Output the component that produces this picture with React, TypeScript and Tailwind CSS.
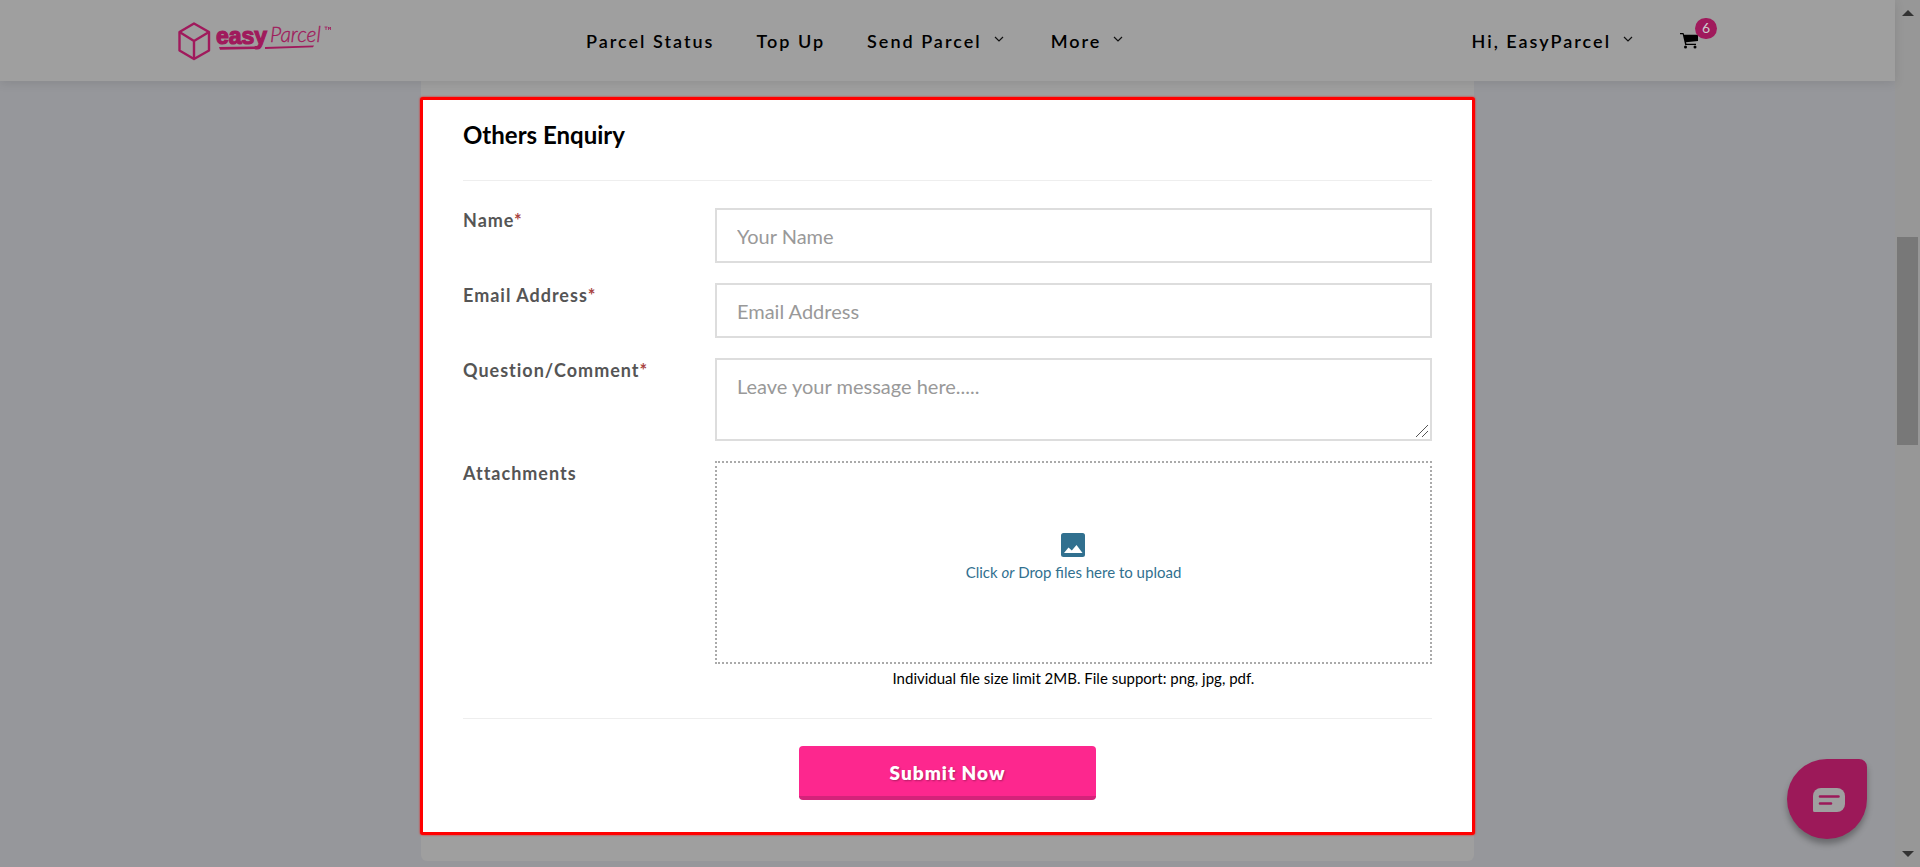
import type { ReactNode } from "react";

function Logo() {
  return (
    <svg width="154" height="40" viewBox="0 0 154 40" role="img" aria-label="easyParcel">
      <g fill="none" stroke="#a01a5c" strokeWidth="2.4" strokeLinejoin="round">
        <path d="M17 2.500 32 11v18.500L17 38 2.500 29.500V11Z" />
        <path d="M2.500 11 17 20l15-9M17 20v18" />
      </g>
      <text x="39" y="23" fontFamily="Liberation Sans" fontWeight="700" fontSize="23" fill="#a01a5c" stroke="#a01a5c" strokeWidth="1.2">
        easy
      </text>
      <text x="93" y="21" fontFamily="Lato" fontStyle="italic" fontWeight="300" fontSize="21" fill="#a01a5c" stroke="#a01a5c" strokeWidth="0.3">
        Parcel
      </text>
      <path d="M42 26 78 25.500v2.500l-35 .8ZM88 26 137 24.500l-1 1.700-48 1.800Z" fill="#a01a5c" />
      <path d="M147.500 6h3M149 6v3M151.500 9V6l1 1.500 1-1.500v3" fill="none" stroke="#a01a5c" strokeWidth="0.8" />
    </svg>
  );
}

function Chevron() {
  return (
    <svg width="10" height="6" viewBox="0 0 10 6" className="mr-[5px] mb-1 ml-3" aria-hidden="true">
      <path d="m1 1 4 4 4-4" fill="none" stroke="#111" strokeWidth="1.2" />
    </svg>
  );
}

function NavLink({ children, menu = false }: { children: ReactNode; menu?: boolean }) {
  return (
    <a href="#" className="flex items-center whitespace-nowrap text-lg font-semibold tracking-[2px] text-black">
      {children}
      {menu && <Chevron />}
    </a>
  );
}

function Row({ label, id, required = false, children }: { label: string; id: string; required?: boolean; children: ReactNode }) {
  return (
    <div className="grid grid-cols-[26fr_74fr]">
      <label htmlFor={id} className="text-lg leading-6 font-bold tracking-[1px] text-[#555]">
        {label}
        {required && <span className="text-[#a94442]">*</span>}
      </label>
      <div>{children}</div>
    </div>
  );
}

const field =
  "block w-full border-2 border-[#ddd] bg-white px-5 text-xl text-[#555] placeholder:text-[#999] focus:outline-none";

export default function App() {
  return (
    <div className="flex min-h-screen bg-[#96979b] font-['Lato',sans-serif] text-black">
      <div className="flex min-w-0 flex-1 flex-col">
        <header className="z-10 flex h-[81px] items-center bg-[#9f9f9f] px-[177px] shadow-[0_2px_10px_rgba(0,0,0,0.1)]">
          <a href="#" className="w-[409px]">
            <Logo />
          </a>
          <nav className="flex items-center gap-[42px]">
            <NavLink>Parcel Status</NavLink>
            <NavLink>Top Up</NavLink>
            <NavLink menu>Send Parcel</NavLink>
            <NavLink menu>More</NavLink>
          </nav>
          <div className="ml-auto flex items-center pr-5">
            <NavLink menu>Hi, EasyParcel</NavLink>
            <a href="#" aria-label="Cart" className="relative ml-[42px]">
              <svg width="18" height="16" viewBox="0 0 18 16" aria-hidden="true">
                <path d="M0 0h3.500l.6 1.700H18V8L6 9.300l.4 1.500H16V12H5.200L2.700 1.300H0Z" />
                <circle cx="5.500" cy="14" r="1.500" />
                <circle cx="15" cy="14" r="1.500" />
              </svg>
              <span className="absolute -top-[15px] left-[15px] flex h-[21px] w-[22px] items-center justify-center rounded-full bg-[#a01a5c] text-sm text-[#ccc]">
                6
              </span>
            </a>
          </div>
        </header>

        <main className="mx-auto w-full max-w-[1053px] rounded-b-md bg-[#9f9f9f] pt-4 pb-[26px]">
          <section className="-mx-px rounded-[3px] border-3 border-[#f00] bg-white px-10 pb-8 shadow-[0_0_2px_#f00]">
            <h1 className="border-b border-[#eee] pt-5 pb-[30px] text-2xl leading-[30px] font-bold">Others Enquiry</h1>
            <form className="pt-[27px]" onSubmit={(e) => e.preventDefault()}>
              <div className="flex flex-col gap-5">
                <Row label="Name" id="name" required>
                  <input id="name" type="text" placeholder="Your Name" className={`${field} h-[55px]`} />
                </Row>
                <Row label="Email Address" id="email" required>
                  <input id="email" type="email" placeholder="Email Address" className={`${field} h-[55px]`} />
                </Row>
                <Row label="Question/Comment" id="message" required>
                  <div className="relative">
                    <textarea id="message" placeholder="Leave your message here....." className={`${field} h-[83px] resize-none py-3`} />
                    <svg width="12" height="12" viewBox="0 0 12 12" className="pointer-events-none absolute right-1 bottom-1" aria-hidden="true">
                      <path d="M0 12 12 0M6 12l6-6" stroke="#555" strokeWidth="1" />
                    </svg>
                  </div>
                </Row>
                <Row label="Attachments" id="files">
                  <label className="flex h-[203px] cursor-pointer flex-col items-center justify-center border-2 border-dotted border-[#aaa] pb-[10px] text-[15px] leading-6 text-[#31708f]">
                    <input id="files" type="file" multiple className="sr-only" />
                    <svg width="26" height="26" viewBox="0 0 26 26" className="mb-0.5" aria-hidden="true">
                      <rect x="1" y="1" width="24" height="24" rx="2.500" fill="#31708f" />
                      <path d="m4 21 4.500-5.500 3.300 3L16.500 13 22.500 21Z" fill="#fff" />
                    </svg>
                    <span>
                      Click <em>or</em> Drop files here to upload
                    </span>
                  </label>
                  <p className="pt-0.5 text-center text-[15px] leading-6">Individual file size limit 2MB. File support: png, jpg, pdf.</p>
                </Row>
              </div>
              <div className="mt-7 flex justify-center border-t border-[#eee] pt-[27px]">
                <button
                  type="submit"
                  className="h-[54px] w-[297px] rounded border-b-4 border-[#d4237a] bg-[#fd278e] pt-1 text-[19px] font-extrabold tracking-[1px] text-white [text-shadow:1px_1px_2px_rgba(0,0,0,0.3)]"
                >
                  Submit Now
                </button>
              </div>
            </form>
          </section>
        </main>
      </div>

      <div className="flex w-[25px] flex-col items-center bg-[#979797]" aria-hidden="true">
        <svg width="12" height="6" viewBox="0 0 12 6" className="mt-[10px]">
          <path d="m6 0 6 6H0Z" fill="#333" />
        </svg>
        <div className="mt-[221px] h-[208px] w-[21px] bg-[#787878]" />
        <svg width="12" height="6" viewBox="0 0 12 6" className="mt-auto mb-[10px]">
          <path d="M0 0h12L6 6Z" fill="#333" />
        </svg>
      </div>

      <button
        type="button"
        aria-label="Chat"
        className="fixed right-[53px] bottom-7 z-20 flex h-20 w-20 items-center justify-center rounded-[40px] rounded-tr-[8px] bg-[#9c1959] shadow-[0_5px_6px_rgba(0,0,0,0.3)]"
      >
        <svg width="32" height="24" viewBox="0 0 32 24" className="mt-0.5 ml-1" aria-hidden="true">
          <path d="M8 0h16a8 8 0 0 1 8 8v8a8 8 0 0 1-8 8H1.500A1.500 1.500 0 0 1 0 22.500V8A8 8 0 0 1 8 0Z" fill="#9f9f9f" />
          <path d="M7 8.500h18.500M7 15.500h11" stroke="#9c1959" strokeWidth="2.600" strokeLinecap="round" />
        </svg>
      </button>
    </div>
  );
}
